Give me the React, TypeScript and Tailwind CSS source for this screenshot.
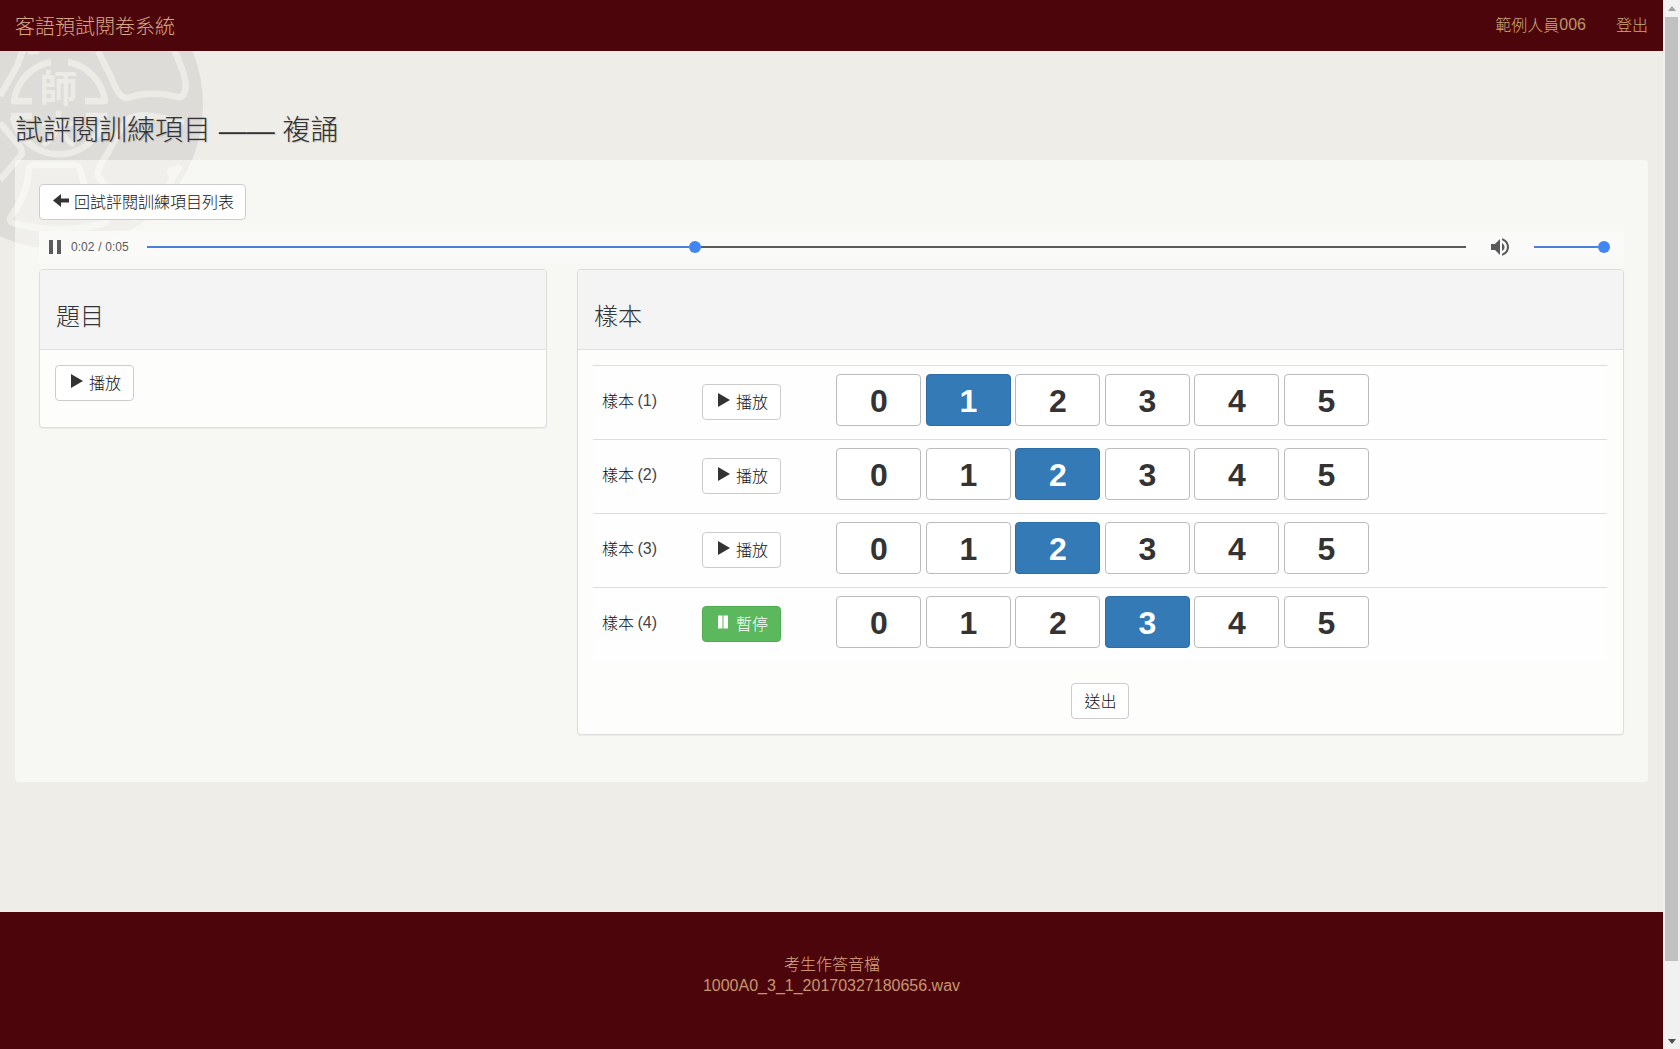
import React from 'react';

const scores = [0, 1, 2, 3, 4, 5];
const samples = [
  { id: 1, score: 1, playing: false },
  { id: 2, score: 2, playing: false },
  { id: 3, score: 2, playing: false },
  { id: 4, score: 3, playing: true },
];

function Emblem() {
  return (
    <svg className="absolute left-0 top-[51px] h-[200px] w-[204px]" viewBox="0 51 204 200" fill="none" stroke="#ecebe6" strokeWidth="6.500" strokeLinejoin="round" strokeLinecap="butt">
      <circle cx="59" cy="105" r="144" fill="#dddcd8" stroke="none" />
      <path d="M11 101H32M14 101A46 46 0 0 1 51 62M68 62A46 46 0 0 1 105 101H85" />
      <path d="M13 117A47 47 0 0 0 105 117" />
      <path d="M11 116H32M86 116H107" />
      <path d="M98 51L112 79Q119 99 128 98C143 92 163 93 177 97C188 99 187 81 182 69L174 49" />
      <path d="M23 50L17 66L0 96M28 51H39" />
      <path d="M0 180L22 154Q22 147 16 142L0 123" />
      <path d="M98 176Q96 171 106 156C117 138 123 119 133 117Q141 114 151 116L184 122M98 176L133 219M180 165L170 183Q160 196 133 219" />
      <path d="M29 168Q30 165 36 165H75Q79 165 80 170L87 194Q93 207 106 218Q108 224 101 224Q59 235 17 224Q6 222 12 215Q28 193 29 168Z" />
      <circle cx="173" cy="172" r="6" fill="#ecebe6" stroke="none" />
      <text x="58.500" y="101.500" textAnchor="middle" fill="#ecebe6" stroke="none" className="font-['Noto_Sans_CJK_TC',sans-serif] text-[38px] font-bold">師</text>
      <text x="58.500" y="143" textAnchor="middle" fill="#ecebe6" stroke="none" className="font-['Noto_Sans_CJK_TC',sans-serif] text-[38px] font-bold">大</text>
    </svg>
  );
}

function PlayIcon() {
  return (
    <svg className="mr-[5px] mt-[-4px] h-4 w-4" viewBox="0 0 16 16" fill="#333"><path d="M3 1v14l12-7z" /></svg>
  );
}

function PlayButton({ playing = false }: { playing?: boolean }) {
  if (playing) {
    return (
      <button className="flex h-9 w-[79px] items-center rounded border border-[#4cae4c] bg-[#5cb85c] pl-3 text-white">
        <svg className="mr-[5px] mt-[-4px] h-4 w-4" viewBox="0 0 16 16" fill="#fff"><path d="M3 1.500h4.500v13H3zM8.500 1.500H13v13H8.500z" /></svg>
        <span className="pt-[2px]">暫停</span>
      </button>
    );
  }
  return (
    <button className="flex h-9 w-[79px] items-center rounded border border-[#ccc] bg-white pl-3 text-[#111]">
      <PlayIcon />
      <span className="pt-[2px]">播放</span>
    </button>
  );
}

function Panel({ title, className, children }: { title: string; className: string; children: React.ReactNode }) {
  return (
    <section className={`rounded border border-[#ddd] bg-[#fdfdfb] shadow-[0_1px_1px_rgba(0,0,0,0.05)] ${className}`}>
      <h3 className="h-[80px] rounded-t-[3px] border-b border-[#ddd] bg-[#f4f4f4] px-4 pt-8 text-2xl leading-[30px]">{title}</h3>
      {children}
    </section>
  );
}

function AudioBar() {
  return (
    <div className="mt-[11px] flex h-8 w-[1585px] items-center bg-[#fafafa]/90">
      <svg className="ml-[10px] h-[14px] w-3" viewBox="0 0 12 14" fill="#5a5a5a"><path d="M0 0h4v14H0zM8 0h4v14H8z" /></svg>
      <span className="ml-[10px] w-[76px] text-xs font-normal text-[#5a5a5a] [word-spacing:0.5px]">0:02 / 0:05</span>
      <div className="flex w-[1319px] items-center">
        <div className="h-[2px] w-[542px] bg-[#4a80dc]" />
        <div className="h-3 w-3 rounded-full bg-[#4285f4]" />
        <div className="h-[2px] grow bg-[#5a5a5a]" />
      </div>
      <svg className="ml-[22px] h-6 w-6" viewBox="0 0 24 24" fill="#5a5a5a"><path d="M3 9v6h4l5 5V4L7 9H3zm13.500 3c0-1.770-1.020-3.290-2.500-4.030v8.050c1.480-.730 2.500-2.250 2.500-4.020zM14 3.230v2.060c2.890.860 5 3.540 5 6.710s-2.110 5.850-5 6.710v2.060c4.010-.910 7-4.490 7-8.770s-2.990-7.860-7-8.770z" /></svg>
      <div className="ml-[22px] flex w-[76px] items-center">
        <div className="h-[2px] grow bg-[#4a80dc]" />
        <div className="h-3 w-3 rounded-full bg-[#4285f4]" />
      </div>
    </div>
  );
}

export default function App() {
  return (
    <div className="relative flex h-[1049px] w-[1680px] overflow-hidden bg-[#eeede8] font-['Liberation_Sans','Noto_Sans_CJK_TC',sans-serif] text-base leading-[22px] font-light text-[#333]">
      <Emblem />
      <div className="relative flex w-[1663px] flex-col">
        <header className="flex h-[51px] items-center justify-between bg-[#4c060b] px-[15px] text-[#dba685]">
          <span className="pt-[2px] text-xl">客語預試閱卷系統</span>
          <nav className="flex gap-[30px] pt-px text-[#d0a878]">
            <a>範例人員<span className="relative -top-px text-[#bd9468]">006</span></a>
            <a>登出</a>
          </nav>
        </header>
        <h1 className="mt-[65px] h-[44px] pl-[15px] text-[28px] leading-[30px] [text-shadow:1px_1px_1px_rgba(0,0,0,0.15)]">試評閱訓練項目 —— 複誦</h1>
        <main className="ml-[15px] h-[622px] w-[1633px] rounded bg-[#fffffc]/55 pl-6 pt-6">
          <button className="flex h-9 w-[207px] items-center rounded border border-[#ccc] bg-white pl-[13px] text-[#111]">
            <svg className="mr-[5px] mt-[-3px] h-[13px] w-4" viewBox="0 0 16 13" fill="#333"><path d="M0 6.500L8 0v4.500h8v4H8V13z" /></svg>
            <span className="pt-[2px]">回試評閱訓練項目列表</span>
          </button>
          <AudioBar />
          <div className="mt-[6px] flex items-start gap-[30px]">
            <Panel title="題目" className="h-[159px] w-[508px]">
              <div className="p-[15px]"><PlayButton /></div>
            </Panel>
            <Panel title="樣本" className="h-[466px] w-[1047px]">
              <div className="pr-4 pl-[15px] pt-[15px]">
                <div className="bg-[#fefefe]">
                  {samples.map((s) => (
                    <div key={s.id} className="flex h-[74px] border-t border-[#ddd] pt-2 pl-[9px]">
                      <span className="w-[100px] pt-[17px] text-[#111]">樣本 <span className="relative -top-px -ml-px text-[#444]">({s.id})</span></span>
                      <div className="w-[134px] pt-[10px]"><PlayButton playing={s.playing} /></div>
                      <div className="flex gap-[4.500px]">
                        {scores.map((n) => (
                          <button
                            key={n}
                            className={`h-[52px] w-[85px] rounded border pt-[2px] pl-px text-[32px] leading-none font-bold ${n === s.score ? 'border-[#2e6da4] bg-[#337ab7] text-white' : 'border-[#bbb] bg-white'}`}
                          >
                            {n}
                          </button>
                        ))}
                      </div>
                    </div>
                  ))}
                </div>
                <div className="mt-[22px] flex justify-center pr-px">
                  <button className="h-9 w-[58px] rounded border border-[#ccc] bg-white pt-[2px] pl-[2px] text-[#111]">送出</button>
                </div>
              </div>
            </Panel>
          </div>
        </main>
        <footer className="mt-[130px] h-[137px] bg-[#4c060b] pt-[42px] text-center text-[#c8956f]">
          <div className="h-[21px] pl-px text-[#dba685]">考生作答音檔</div>
          <div>1000A0_3_1_20170327180656.wav</div>
        </footer>
      </div>
      <aside className="relative flex w-[17px] flex-col items-center bg-[#f1f1f1]">
        <svg className="mt-[6px] h-[5px] w-2" viewBox="0 0 8 5" fill="#a3a3a3"><path d="M4 0L8 5H0z" /></svg>
        <div className="mt-[6px] h-[944px] w-[13px] bg-[#c1c1c1]" />
        <svg className="mt-[78px] h-[5px] w-2" viewBox="0 0 8 5" fill="#505050"><path d="M0 0h8L4 5z" /></svg>
      </aside>
    </div>
  );
}
